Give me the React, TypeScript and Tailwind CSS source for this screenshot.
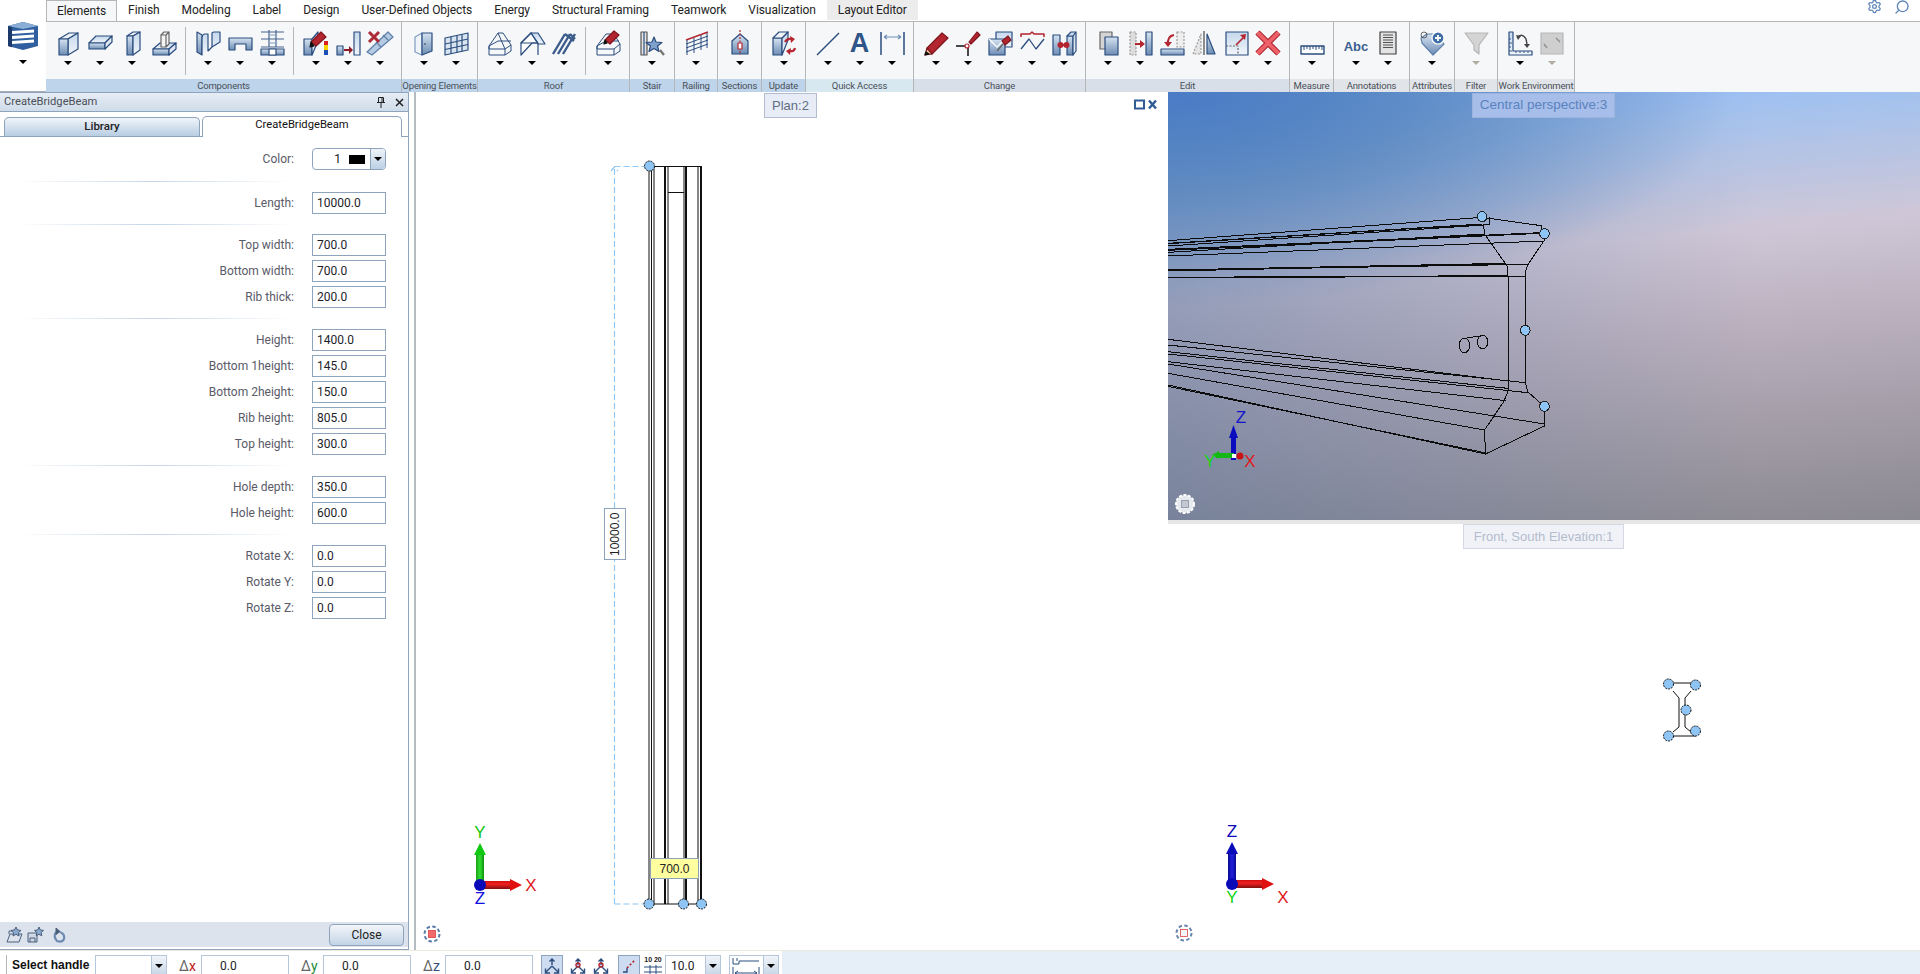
import { Settings, Search } from "lucide-react";
import type { ReactNode } from "react";

const NAVY = "#2b4d7e";
const RED = "#b3252f";

// every ribbon icon sits in a 32x30 box
function Ico({ children }: { children: ReactNode }) {
  return (
    <svg width="32" height="30" viewBox="0 0 32 30" fill="none" stroke={NAVY} strokeWidth="1.2" strokeLinejoin="round">
      {children}
    </svg>
  );
}

const B = "url(#ibar)";
const P = "url(#ipale)";

const icons: Record<string, ReactNode> = {
  wall: (
    <>
      <path d="M7 12 17 6h9l-10 6z" fill="#eef3f8" />
      <path d="M16 12 26 6v16l-10 6z" fill={P} />
      <path d="M7 12h9v16H7z" fill={B} />
    </>
  ),
  slab: (
    <>
      <path d="M5 16 12 9h16l-7 7z" fill={P} />
      <path d="M5 16h16v6H5z" fill={B} />
      <path d="m21 16 7-7v6l-7 7z" fill="#dfe8f2" />
    </>
  ),
  column: (
    <>
      <path d="m11 9 6-4h7l-7 4z" fill="#eef3f8" />
      <path d="M11 9h6v19h-6z" fill={B} />
      <path d="m17 9 7-4v18l-7 5z" fill={P} />
    </>
  ),
  footing: (
    <>
      <path d="M5 22 12 16h16l-7 6z" fill={P} />
      <path d="M5 22h16v6H5z" fill={B} />
      <path d="m21 22 7-6v6l-7 6z" fill="#dfe8f2" />
      <path d="m13 8 3-3h5l-3 3zM13 8h5v12h-5zM18 8l3-3v12l-3 3z" fill="#f4f4f4" stroke="#666" />
    </>
  ),
  stripWall: (
    <>
      <path d="M5 5l5 3v20l-5-3z" fill={B} />
      <path d="M10 28V12q0-5 3-5h3v17l4-4V6q0-1 2-1h6v10l-8 5" fill={P} stroke={NAVY} />
    </>
  ),
  lintel: <path d="M5 11h23v12h-6v-6H11v6H5z" fill={B} />,
  joint: (
    <>
      <path d="M5 5h23M5 12h23M5 20h23M13 3v17M20 3v17" stroke="#48658f" />
      <path d="M14 8h5M14 16h5" stroke="#7f9dc2" />
      <path d="M5 22h23v6H5z" fill={B} />
      <path d="M13 22h7v6h-7z" fill="#fff" />
    </>
  ),
  paintWall: (
    <>
      <path d="M4 12h8v16H4z" fill={B} />
      <path d="m12 12 6-7v9l-6 14z" fill={P} />
      <path d="M11 15 21 5l5 5-10 9z" fill={RED} stroke="#7e1620" />
      <path d="m11 15 3 4-4 1z" fill="#111" stroke="#111" />
      <path d="M24 14h4v4h-4z" fill="#d61f26" stroke="none" />
      <path d="M24 18h4v5h-4z" fill="#f6d000" stroke="none" />
      <path d="M24 23h4v5h-4z" fill="#1a4fb5" stroke="none" />
    </>
  ),
  pushBar: (
    <>
      <path d="M5 19h6v9H5z" fill={B} />
      <path d="M22 5h6v23h-6z" fill={P} />
      <path d="M12 23h7" stroke="#8d1c28" strokeWidth="2" />
      <path d="m17 19 4 4-4 4z" fill="#8d1c28" stroke="none" />
    </>
  ),
  delWall: (
    <>
      <path d="m7 28 21-18-5-5-21 20z" fill="#b4c9e2" stroke="#5d7fa9" transform="translate(1 0)" />
      <path d="m17 20-5-5M24 13l-5-5" stroke="#5d7fa9" />
      <path d="m5 5 10 10M15 5 5 15" stroke="#ad2b37" strokeWidth="3" />
    </>
  ),
  door: (
    <>
      <path d="M7 10 14 6v22l-7-3z" fill="#eff4f9" stroke="#7f9cc0" />
      <path d="M14 6h10v18l-10 4z" fill={B} />
      <circle cx="17" cy="17" r=".7" fill="#111" stroke="none" />
    </>
  ),
  grid: (
    <>
      <path d="M5 11 28 6v17L5 28z" fill="#d8e4f0" />
      <path d="M5 17 28 12M5 22.500 28 17.500M11 10v17M17 8.500v17M22 7.500v17" />
    </>
  ),
  wireHouse: <path d="M5 19 14 6h5l8 12-6 4H5zM5 19v9h16v-6M21 28l6-4v-6M14 6l7 16M5 19l9-5h13" strokeWidth="1" />,
  roof: (
    <>
      <path d="M5 28V16L15 6l13 10v0l-12 0z" fill="#fff" />
      <path d="M15 6h7l7 11H22z" fill={P} />
      <path d="M5 16 15 6l7 10H5zM22 16v12" />
    </>
  ),
  rafters: <path d="M5 27 17 7M10 27 22 7M15 27 27 7M17 7l9 7M22 7l5 5" strokeWidth="2.4" stroke="#3c5d8c" />,
  wirePaint: (
    <>
      <path d="M5 19 14 7h8l6 10-6 5H5zM5 19v9h17v-6M22 28l6-4v-7M5 19l9-5h13" strokeWidth="1" />
      <path d="M13 13 22 4l5 4-9 9z" fill={RED} stroke="#7e1620" />
      <path d="m13 13 2 3-3 1z" fill="#111" stroke="#111" />
    </>
  ),
  stairFind: (
    <>
      <path d="M5 5h6v23H5z" fill="#e4e4e4" stroke="#555" />
      <path d="M8 5v23" stroke={NAVY} />
      <path d="m18 10 2 5 6 .5-4.500 3.500 1.500 5.500-5-3-5 3 1.500-5.500L10 15.500l6-.5z" fill="#7ea2cc" />
      <path d="m24 23 4 5" stroke="#777" strokeWidth="2.400" />
    </>
  ),
  railing: (
    <>
      <path d="M6 13 28 5" stroke={RED} strokeWidth="1.500" />
      <path d="M6 17 28 9M6 21 28 13M6 25 28 17M7 13v15M14 11v15M21 8v15M27 6v15" strokeWidth="1" />
    </>
  ),
  section: (
    <>
      <path d="M8 14 16 7l8 7v13H8z" fill={B} />
      <path d="M16 3v25" stroke={RED} strokeDasharray="2 1.500" />
      <path d="M14 16h4v6h-4z" fill="#fff" stroke={RED} />
    </>
  ),
  update: (
    <>
      <path d="M5 11h9v17H5z" fill={B} />
      <path d="m14 11 6-6v8l-6 15z" fill={P} />
      <path d="m5 11 6-6h9l-6 6z" fill="#eef3f8" />
      <path d="M17 15q2-4 6-3" stroke={RED} strokeWidth="2.200" />
      <path d="m22 9 5 3-4 4z" fill={RED} stroke="none" />
      <path d="M27 21q-1 4-5 3" stroke={RED} strokeWidth="2.200" />
      <path d="m23 21-5 3 4 4z" fill={RED} stroke="none" />
    </>
  ),
  line: <path d="M5 28 27 6" strokeWidth="1.500" />,
  dim: (
    <>
      <path d="M5 5v23M28 5v23" strokeWidth="1.500" />
      <path d="M8 10h17M8 10l3-2M8 10l3 2M25 10l-3-2M25 10l-3 2" stroke="#6f8fb7" />
    </>
  ),
  pencil: (
    <>
      <path d="M7 21 22 6l6 5-16 16z" fill={RED} stroke="#7e1620" />
      <path d="m7 21 5 6-7 1z" fill="#e9c695" stroke="#7e1620" />
      <path d="m5 28 1-3 3 2z" fill="#111" stroke="#111" />
    </>
  ),
  trim: (
    <>
      <path d="M4 19h9M16 21v8" stroke="#111" strokeWidth="1.500" />
      <circle cx="15" cy="19" r="2" fill="#fff" stroke={RED} />
      <path d="m17 15 8-10 3 3-9 9z" fill={RED} stroke="#7e1620" />
    </>
  ),
  offset: (
    <>
      <path d="M12 5h16v15H12z" fill={P} />
      <path d="M5 12h16v16H5z" fill={B} />
      <path d="m5 12 8 8 8-8" stroke="#fff" />
      <path d="m13 24 6-7" stroke="#666" strokeWidth="1.500" />
      <path d="m18 14 6-5 3 4-6 5z" fill={RED} stroke="#7e1620" />
    </>
  ),
  zigzag: (
    <>
      <path d="M5 10V7h9l2-2 2 2h10v3" stroke={RED} strokeWidth="1.500" />
      <path d="m5 22 8-10 7 10 8-10" strokeWidth="1.300" />
    </>
  ),
  connect: (
    <>
      <path d="M5 8h7v20H5z" fill={B} />
      <path d="M19 9h6v19h-6z" fill={B} />
      <path d="m19 9 4-4h5l-3 4zM25 9l3-4v19l-3 4z" fill={P} />
      <path d="M12 18h7" stroke={RED} strokeWidth="2" />
      <circle cx="12.500" cy="18" r="3" fill={RED} stroke="none" />
      <circle cx="18.500" cy="18" r="3" fill={RED} stroke="none" />
    </>
  ),
  copy: (
    <>
      <path d="M8 5h12v17H8z" fill="#d4d4d4" stroke="#666" />
      <path d="M13 10h13v18H13z" fill={B} />
    </>
  ),
  move: (
    <>
      <path d="M6 5h6v23H6z" fill="#ddd" stroke="#999" strokeDasharray="2 1.500" />
      <path d="M22 5h6v23h-6z" fill={B} />
      <path d="M11 17h7" stroke={RED} strokeWidth="2" />
      <path d="m16 13 5 4-5 4z" fill={RED} stroke="none" />
    </>
  ),
  rotate: (
    <>
      <path d="M5 22h23v6H5z" fill={B} />
      <path d="M21 5h7v15h-7z" fill="#eee" stroke="#999" strokeDasharray="2 1.500" />
      <path d="M18 8q-7 1-6 10" stroke={RED} strokeWidth="2" />
      <path d="m8 15 4 5 4-5z" fill={RED} stroke="none" />
    </>
  ),
  mirror: (
    <>
      <path d="M13 7v20H5z" fill="#e5e5e5" stroke="#999" strokeDasharray="2 1.500" />
      <path d="M16 4v24" stroke="#444" />
      <path d="M19 7v20h8z" fill={B} />
    </>
  ),
  scale: (
    <>
      <path d="M6 5h22v23H6z" fill={P} />
      <path d="M6 19h12v9" stroke="#666" strokeDasharray="2 1.500" />
      <path d="m16 18 8-8" stroke={RED} strokeWidth="1.700" />
      <path d="m20 8 6-1-1 6z" fill={RED} stroke="none" />
    </>
  ),
  del: (
    <>
      <path d="m7 7 21 21M28 7 7 28" stroke="#a51e28" strokeWidth="6" transform="translate(-1.500 -1.500)" />
      <path d="m7 7 21 21M28 7 7 28" stroke="#ee6068" strokeWidth="4" transform="translate(-1.500 -1.500)" />
    </>
  ),
  ruler: (
    <>
      <path d="M5 19h23v8H5z" fill="#fff" strokeWidth="1.400" />
      <path d="M8 19v4M11 19v3M14 19v4M17 19v3M20 19v4M23 19v3M26 19v4" strokeWidth="1" />
    </>
  ),
  abc: (
    <text x="16" y="24" textAnchor="middle" fontFamily="Liberation Sans, sans-serif" fontWeight="700" fontSize="13" fill="#3d5f92" stroke="none">
      Abc
    </text>
  ),
  doc: (
    <>
      <path d="M8 5h16v22H8z" fill="#e3e3e3" stroke="#444" />
      <path d="M11 8h10M11 10.500h10M11 13h10M11 15.500h10M11 18h10M11 20.500h10" stroke="#444" strokeWidth=".9" />
    </>
  ),
  tag: (
    <>
      <path d="M5 11 11 7h9l8 10-11 11L6 16z" fill={B} stroke="#5f82ad" />
      <circle cx="8" cy="8" r="3" stroke="#444" strokeWidth=".8" />
      <circle cx="22" cy="11" r="6" fill="#3f6da6" stroke="#fff" />
      <path d="M19 11h6M22 8v6" stroke="#fff" strokeWidth="1.800" />
    </>
  ),
  filter: <path d="M5 6h23l-9 12v9l-5-4v-5z" fill="#d4d4d4" stroke="#b5b5b5" />,
  workEnv: (
    <>
      <path d="M5 5v23h23v-4H9V5z" fill={P} />
      <path d="M5 24h3M5 20h2M5 16h3M5 12h2M12 24v2M16 24v2M20 24v2M24 24v2" strokeWidth=".9" />
      <path d="M13 11q5-6 9 1l1 5" stroke="#444" strokeWidth="1.400" />
      <path d="m20 17 3 4 3-4zM12 8l2 5 3-4z" fill="#444" stroke="none" />
    </>
  ),
  zoomBox: (
    <>
      <path d="M5 6h22v21H5z" fill="#cfcfcf" stroke="#b8b8b8" />
      <path d="m11 21-3-4M20 11l4 4" stroke="#8f8f8f" strokeWidth="1.400" />
    </>
  ),
};

type Group = {
  label: string;
  width: string;
  strip: string;
  items: string[];
};

const groups: Group[] = [
  { label: "Components", width: "w-[356px]", strip: "bg-[#bdd4ea]", items: ["wall", "slab", "column", "footing", "|", "stripWall", "lintel", "joint", "|", "paintWall", "pushBar", "delWall"] },
  { label: "Opening Elements", width: "w-[76px]", strip: "bg-[#bdd4ea]", items: ["door", "grid"] },
  { label: "Roof", width: "w-[152px]", strip: "bg-[#bdd4ea]", items: ["wireHouse", "roof", "rafters", "|", "wirePaint"] },
  { label: "Stair", width: "w-[45px]", strip: "bg-[#bdd4ea]", items: ["stairFind"] },
  { label: "Railing", width: "w-[43px]", strip: "bg-[#bdd4ea]", items: ["railing"] },
  { label: "Sections", width: "w-[44px]", strip: "bg-[#bdd4ea]", items: ["section"] },
  { label: "Update", width: "w-[44px]", strip: "bg-[#bdd4ea]", items: ["update"] },
  { label: "Quick Access", width: "w-[108px]", strip: "bg-[#d8e8f0]", items: ["line", "letter", "dim"] },
  { label: "Change", width: "w-[172px]", strip: "bg-[#d8dfe9]", items: ["pencil", "trim", "offset", "zigzag", "connect"] },
  { label: "Edit", width: "w-[204px]", strip: "bg-[#d8dfe9]", items: ["copy", "move", "rotate", "mirror", "scale", "del"] },
  { label: "Measure", width: "w-[44px]", strip: "bg-[#e1e5ea]", items: ["ruler"] },
  { label: "Annotations", width: "w-[76px]", strip: "bg-[#e1e5ea]", items: ["abc", "doc"] },
  { label: "Attributes", width: "w-[45px]", strip: "bg-[#e1e5ea]", items: ["tag"] },
  { label: "Filter", width: "w-[43px]", strip: "bg-[#e1e5ea]", items: ["filter"] },
  { label: "Work Environment", width: "w-[77px]", strip: "bg-[#e1e5ea]", items: ["workEnv", "zoomBox"] },
];

const tabs = ["Finish", "Modeling", "Label", "Design", "User-Defined Objects", "Energy", "Structural Framing", "Teamwork", "Visualization"];

const fieldGroups = [
  [{ label: "Length:", value: "10000.0" }],
  [
    { label: "Top width:", value: "700.0" },
    { label: "Bottom width:", value: "700.0" },
    { label: "Rib thick:", value: "200.0" },
  ],
  [
    { label: "Height:", value: "1400.0" },
    { label: "Bottom 1height:", value: "145.0" },
    { label: "Bottom 2height:", value: "150.0" },
    { label: "Rib height:", value: "805.0" },
    { label: "Top height:", value: "300.0" },
  ],
  [
    { label: "Hole depth:", value: "350.0" },
    { label: "Hole height:", value: "600.0" },
  ],
  [
    { label: "Rotate X:", value: "0.0" },
    { label: "Rotate Y:", value: "0.0" },
    { label: "Rotate Z:", value: "0.0" },
  ],
];

function Caret({ muted }: { muted?: boolean }) {
  return <span className={`block h-0 w-0 border-x-[4px] border-t-[4px] border-x-transparent ${muted ? "border-t-[#b0aca0]" : "border-t-black"}`} />;
}

function RibbonGroup({ group }: { group: Group }) {
  const isMuted = (name: string) => name === "filter" || name === "zoomBox";
  return (
    <div className={`flex flex-col border-r border-[#b4b6b8] ${group.width}`}>
      <div className="flex h-[57px] justify-center pt-[5px]">
        {group.items.map((name, i) =>
          name === "|" ? (
            <div key={i} className="flex h-[48px] w-[12px] justify-center">
              <div className="w-px bg-[#b4b6b8]" />
            </div>
          ) : (
            <div key={i} className="flex w-8 flex-col items-center">
              {name === "letter" ? (
                <div className="flex h-[30px] w-8 items-center justify-center pt-[3px] font-['Liberation_Sans',sans-serif] text-[27px] font-bold leading-[27px] text-[#2f5488]">A</div>
              ) : (
                <Ico>{icons[name]}</Ico>
              )}
              <div className="mt-[4px]">
                <Caret muted={isMuted(name)} />
              </div>
            </div>
          ),
        )}
      </div>
      <div className={`h-[13px] whitespace-nowrap text-center text-[9.5px] leading-[13px] tracking-[-0.15px] text-[#4a4f58] ${group.strip}`}>{group.label}</div>
    </div>
  );
}

function AppIcon() {
  return (
    <svg width="32" height="28" viewBox="0 0 32 28">
      <path d="M1 4 16 0l15 4v20l-15 4-15-4z" fill="#2f5f9e" />
      <path d="M1 4 16 0l15 4-15 3z" fill="#8aaed6" />
      <path d="M5 9l22-1.500v3L5 12zM5 14l22-1.500v3L5 17zM5 19l22-1.500v3L5 22z" fill="#fff" />
      <path d="M1 4v20l4 1.200V5z" fill="#1c3a6c" />
    </svg>
  );
}

function Ribbon() {
  return (
    <div className="flex h-[92px] border-b border-[#a9acb0]">
      <div className="flex w-[46px] flex-col items-start bg-white pl-[7px] pt-[22px]">
        <AppIcon />
        <div className="ml-[12px] mt-[10px]">
          <Caret />
        </div>
      </div>
      <div className="flex min-w-0 flex-1 flex-col">
        <div className="flex h-[21px] items-stretch bg-white pb-px text-[12px] tracking-[-0.08px] text-[#222]">
          <div className="-mb-[2px] flex items-center border-x border-t border-[#b4b6b8] bg-[#f6f7f9] px-[10px] pb-[2px]">Elements</div>
          {tabs.map((t) => (
            <div key={t} className="flex items-center px-[11px]">
              {t}
            </div>
          ))}
          <div className="flex items-center bg-[#ececec] px-[11px]">Layout Editor</div>
          <div className="flex flex-1 items-center justify-end gap-[12px] pb-[7px] pr-[10px] text-[#5f86b8]">
            <Settings size={15} />
            <Search size={16} className="-scale-x-100" />
          </div>
        </div>
        <div className="flex flex-1 border-t border-[#b4b6b8] bg-[#f6f7f9]">
          {groups.map((g) => (
            <RibbonGroup key={g.label} group={g} />
          ))}
        </div>
      </div>
    </div>
  );
}

function Divider({ height }: { height: string }) {
  return (
    <div className={`flex items-center pl-[15px] ${height}`}>
      <div className="h-px w-[278px] bg-gradient-to-r from-transparent via-[#c5d6e8] to-transparent" />
    </div>
  );
}

function Field({ label, value }: { label: string; value: string }) {
  return (
    <div className="flex h-[22px] items-center">
      <span className="w-[294px] text-right text-[12px] text-[#5a5a68]">{label}</span>
      <input readOnly value={value} className="ml-[18px] h-[22px] w-[74px] border border-[#8ea3bc] bg-white pl-[4px] text-[12px] text-[#1d1d2a] outline-none" />
    </div>
  );
}

function ParameterPanel() {
  return (
    <aside className="flex w-[409px] flex-col border-b border-r border-[#8ea3bc] bg-white">
      <div className="flex h-[20px] items-center justify-between border-b border-t border-[#8ea3bc] bg-gradient-to-b from-[#e6edf5] to-[#cfdce9] pl-[4px] pr-[3px] text-[11.2px] text-[#4b4f58]">
        <span>CreateBridgeBeam</span>
        <span className="flex items-center gap-[9px] pr-[1px]">
          <svg width="10" height="12" viewBox="0 0 10 12" stroke="#222" fill="none">
            <path d="M2.500 1.500h5v5h-5zM1 6.500h8M5 7v5M6 2v4" />
          </svg>
          <svg width="9" height="9" viewBox="0 0 9 9" stroke="#222" strokeWidth="1.500">
            <path d="m1 1 7 7M8 1 1 8" />
          </svg>
        </span>
      </div>
      <div className="flex h-[24px] items-end pl-[4px]">
        <div className="flex h-[19px] w-[196px] items-center justify-center rounded-t-[5px] border border-b-0 border-[#8ea3bc] bg-gradient-to-b from-[#f0f4f9] to-[#b8cde3] text-[11.5px] font-medium text-[#222]">Library</div>
        <div className="relative z-10 -mb-px ml-[2px] flex h-[21px] w-[200px] items-start justify-center rounded-t-[5px] border border-b-0 border-[#8ea3bc] bg-white text-[11.2px] text-[#111]">CreateBridgeBeam</div>
      </div>
      <div className="flex flex-1 flex-col border-t border-[#8ea3bc] pt-[11px]">
        <div className="flex h-[22px] items-center">
          <span className="w-[294px] text-right text-[12px] text-[#5a5a68]">Color:</span>
          <div className="ml-[18px] flex h-[22px] w-[74px] overflow-hidden rounded-[4px] border border-[#8ea3bc]">
            <div className="flex flex-1 items-center justify-end gap-[8px] pr-[5px] text-[12px] text-[#222]">
              1<span className="h-[9px] w-4 bg-black" />
            </div>
            <div className="flex w-[15px] items-center justify-center border-l border-[#8ea3bc] bg-gradient-to-b from-[#eef3f8] to-[#bcd0e5]">
              <Caret />
            </div>
          </div>
        </div>
        <Divider height="h-[22px]" />
        {fieldGroups.map((fields, i) => (
          <div key={i}>
            {i > 0 && <Divider height={i === 1 ? "h-[20px]" : "h-[21px]"} />}
            <div className="flex flex-col gap-[4px]">
              {fields.map((f) => (
                <Field key={f.label} label={f.label} value={f.value} />
              ))}
            </div>
          </div>
        ))}
        <div className="mb-[2px] mt-auto flex h-[25px] items-center justify-between bg-[#dce3ed] pl-[6px] pr-[4px]">
          <svg width="64" height="18" viewBox="0 0 64 18" fill="none" stroke="#4a5f7c">
            <path d="M1 16 4 8h12l-3 8zM3 8V5h5" />
            <path d="m10 1 1.500 3 3.500.4-2.500 2.300.6 3.300-3.100-1.700L7 10l.6-3.300L5 4.400 8.500 4z" fill="#8aaad0" />
            <path d="M22 7h9v9h-9zM24 16v-4h5v4" fill="#cfd8e4" />
            <path d="m33 1 1.300 3 3.200.4-2.300 2.200.6 3.200L33 8.300l-2.800 1.500.6-3.200-2.300-2.200L31.700 4z" fill="#8aaad0" />
            <path d="M50 6q-3 5 1 9 5 2 7-2 1-5-4-7" strokeWidth="2.200" stroke="#6d8bb2" />
            <path d="m50 2 4 3.500-4 3z" fill="#4a5f7c" />
          </svg>
          <button className="h-[22px] w-[75px] rounded-[4px] border border-[#8ea3bc] bg-gradient-to-b from-[#f3f6fa] to-[#c3d4e6] text-[12px] text-[#222]">Close</button>
        </div>
      </div>
    </aside>
  );
}

function Handle({ x, y }: { x: number; y: number }) {
  return <circle cx={x} cy={y} r="5" fill="#8ec5f5" stroke="#111" strokeWidth="1" strokeDasharray="2 1" />;
}

// arrow triad used by the two flat views, page coordinates
function Axis({ cx, cy, up, upLabel, upFill, mid, midLabel, labelDy }: { cx: number; cy: number; up: string; upLabel: string; upFill: string; mid: string; midLabel: string; labelDy: number }) {
  const labelFont = { fontFamily: "Liberation Sans, sans-serif", fontSize: 17 };
  return (
    <g>
      <rect x={cx - 4} y={cy - 33} width="8" height="33" fill={upFill} />
      <path d={`M${cx - 6} ${cy - 30}L${cx} ${cy - 42} ${cx + 6} ${cy - 30}z`} fill={up} />
      <rect x={cx} y={cy - 4} width="31" height="8" fill="url(#axisRed)" />
      <path d={`M${cx + 30} ${cy - 6}L${cx + 42} ${cy} ${cx + 30} ${cy + 6}z`} fill="#e01010" />
      <circle cx={cx} cy={cy} r="6" fill={mid} />
      <text x={cx} y={cy - 47} textAnchor="middle" fill={up} style={labelFont}>
        {upLabel}
      </text>
      <text x={cx} y={cy + 19} textAnchor="middle" fill={midLabel === "Y" ? "#14d614" : "#1010e0"} style={labelFont}>
        {midLabel}
      </text>
      <text x={cx + 51} y={cy + 6 + labelDy} textAnchor="middle" fill="#e01818" style={labelFont}>
        X
      </text>
    </g>
  );
}

function NavDial({ x, y, center, ring }: { x: number; y: number; center: string; ring: string }) {
  return (
    <g transform={`translate(${x} ${y})`}>
      <circle r="7.500" fill="none" stroke={ring} strokeWidth="2" strokeDasharray="3.500 2.400" />
      <rect x="-3.500" y="-3.500" width="7" height="7" fill={center} stroke="#d44" strokeWidth=".8" />
    </g>
  );
}

function PlanView() {
  const longLines = [
    [649, 1],
    [651.5, 1],
    [654, 1],
    [665, 2],
    [668, 1],
    [684, 1],
    [686, 2],
    [698, 1],
    [701, 2],
  ];
  return (
    <section className="relative flex-1 border-l-2 border-[#b7bbc2] bg-white">
      <div className="absolute left-[348px] top-[1px] z-10 flex h-[25px] w-[53px] items-center justify-center border border-[#b4bdd0] bg-[#e8ecf6] font-['Liberation_Sans',sans-serif] text-[13px] text-[#5f6e85]">Plan:2</div>
      <svg className="absolute right-[10px] top-[6px]" width="24" height="14" viewBox="0 0 24 14" fill="none" stroke="#2f5b94" strokeWidth="2">
        <rect x="1" y="2.500" width="9" height="8" />
        <path d="m15 2.500 7 8M22 2.500l-7 8" strokeWidth="2.400" />
      </svg>
      <svg className="absolute inset-0 h-full w-full">
        <g transform="translate(-416 -92)">
          <path d="M614.500 904V167M611 171l3.500-4 3.500 4M614.500 904H649M614.500 166.500H649" fill="none" stroke="#8fc7f5" strokeWidth="1.200" strokeDasharray="6 3" />
          {longLines.map(([x, w]) => (
            <line key={x} x1={x} x2={x} y1="166" y2="904" stroke="#111" strokeWidth={w} />
          ))}
          <path d="M649 166.500h52M649 904h52M668 192.500h16" stroke="#111" />
          <Handle x={649.5} y={166} />
          <Handle x={649} y={904} />
          <Handle x={683.5} y={904} />
          <Handle x={701.5} y={904} />
          <Axis cx={480} cy={885} up="#10c810" upLabel="Y" upFill="url(#axisGreen)" mid="#0a0ab8" midLabel="Z" labelDy={0} />
          <NavDial x={432} y={934} center="#f26a6a" ring="#5a7aa8" />
        </g>
      </svg>
      <div className="absolute left-[188px] top-[416px] flex h-[52px] w-[22px] rotate-180 items-center justify-center border border-[#8ea3bc] bg-white font-['Liberation_Sans',sans-serif] text-[12px] text-[#222] [writing-mode:vertical-rl]">10000.0</div>
      <div className="absolute left-[234px] top-[766px] flex h-[21px] w-[49px] items-center justify-center border border-[#8ea3bc] bg-[#ffffa0] font-['Liberation_Sans',sans-serif] text-[12px] text-[#222]">700.0</div>
    </section>
  );
}

function PerspectiveView() {
  // coordinates below are in a 1568 x 1284 drawing stretched over the view
  const lines = [
    "M0 452 655 382",
    "M0 460 655 402",
    "M0 461 655 403",
    "M0 468 670 404",
    "M0 478 778 428",
    "M0 481 778 430",
    "M0 487 660 432",
    "M0 498 785 453",
    "M0 540 704 520",
    "M0 543 704 522",
    "M0 541 750 523",
    "M0 562 708 557",
    "M0 563 745 559",
    "M0 748 710 873",
    "M0 765 745 878",
    "M0 785 708 895",
    "M0 792 750 908",
    "M0 815 705 932",
    "M0 822 785 1002",
    "M0 850 660 1020",
    "M0 885 662 1092",
    "M0 889 660 1088",
    "M655 382 778 407V428L785 450 750 525 745 545V878L750 905 785 950V1008L662 1092 660 1020 700 935 710 900V590L708 530 660 432 658 402H670V382",
    "M618 745 656 737",
  ];
  const handles = [
    [655, 380],
    [785, 431],
    [745, 721],
    [785, 949],
  ];
  const axisFont = { fontFamily: "Liberation Sans, sans-serif", fontSize: 17 };
  return (
    <section className="relative h-[428px] bg-[radial-gradient(75%_50%_at_0%_0%,#4a7bc5_0%,rgba(80,130,190,0.7)_45%,rgba(100,150,190,0)_100%),linear-gradient(to_right,rgba(74,106,150,0.42),rgba(74,106,150,0)_78%),linear-gradient(175deg,#8fbaff_0%,#a4c2ee_14%,#cfc7d7_38%,#bab0be_58%,#8a8890_100%)]">
      <div className="absolute left-[304px] top-[1px] z-10 flex h-[25px] w-[143px] items-center justify-center border border-[#9db4dc] bg-[#a6bee9] font-['Liberation_Sans',sans-serif] text-[13.500px] text-[#5b82c0]">Central perspective:3</div>
      <svg className="absolute inset-0 h-full w-full" viewBox="0 6 1568 1284" preserveAspectRatio="none" shapeRendering="crispEdges">
        {lines.map((d) => (
          <path key={d} d={d} fill="none" stroke="#0c0c0c" strokeWidth="1" vectorEffect="non-scaling-stroke" />
        ))}
        <ellipse cx="618" cy="766" rx="11" ry="22" fill="none" stroke="#0c0c0c" vectorEffect="non-scaling-stroke" />
        <ellipse cx="656" cy="756" rx="11" ry="20" fill="none" stroke="#0c0c0c" vectorEffect="non-scaling-stroke" />
        {handles.map(([x, y]) => (
          <ellipse key={x + y} cx={x} cy={y} rx="10" ry="15" fill="#8ec5f5" stroke="#222" vectorEffect="non-scaling-stroke" />
        ))}
      </svg>
      <svg className="absolute inset-0 h-full w-full">
        <g transform="translate(-1168 -92)">
          <rect x="1231" y="432" width="5" height="28" fill="#0a0ac0" />
          <path d="M1229 438l4.500-13 4.500 13z" fill="#0a0ac0" />
          <rect x="1216" y="453" width="18" height="5" fill="#14b814" />
          <path d="M1219 451l-7 4 7 4z" fill="#14b814" />
          <circle cx="1240" cy="456" r="3.500" fill="#c81414" />
          <rect x="1232" y="454" width="4" height="4" fill="#fff" />
          <text x="1241" y="423" textAnchor="middle" fill="#1414c8" style={axisFont}>
            Z
          </text>
          <text x="1210" y="467" textAnchor="middle" fill="#14d614" style={axisFont}>
            Y
          </text>
          <text x="1250" y="467" textAnchor="middle" fill="#e01818" style={axisFont}>
            X
          </text>
          <circle cx="1185" cy="504" r="9" fill="#e6e9ef" stroke="#fff" strokeDasharray="3 1.500" strokeWidth="2" />
          <rect x="1181.500" y="500.500" width="7" height="7" fill="#c3c8d2" stroke="#9aa0aa" />
        </g>
      </svg>
    </section>
  );
}

function ElevationView() {
  return (
    <section className="relative flex-1 bg-white">
      <div className="absolute left-[295px] top-0 z-10 flex h-[25px] w-[161px] items-center justify-center border border-[#d3d8e4] bg-[#f0f2f8] font-['Liberation_Sans',sans-serif] text-[13px] text-[#b4bccc]">Front, South Elevation:1</div>
      <svg className="absolute inset-0 h-full w-full">
        <g transform="translate(-1168 -524)">
          <path d="M1668 683h28M1668 736h28M1673 691l6 7v29l-6 5M1691 691l-6 7v29l6 5" fill="none" stroke="#111" />
          <Handle x={1668.5} y={684} />
          <Handle x={1695.5} y={685} />
          <Handle x={1686} y={710} />
          <Handle x={1668.5} y={736} />
          <Handle x={1695.5} y={731} />
          <Axis cx={1232} cy={884} up="#0a0ab8" upLabel="Z" upFill="url(#axisBlue)" mid="#0a0ab8" midLabel="Y" labelDy={13} />
          <NavDial x={1184} y={933} center="#f2f4f8" ring="#6a84ac" />
        </g>
      </svg>
    </section>
  );
}

function Combo({ width, children }: { width: string; children?: ReactNode }) {
  return (
    <div className={`flex h-[22px] overflow-hidden border border-[#b5c6da] bg-white ${width}`}>
      <div className="flex flex-1 items-center pl-[5px] text-[12px] text-[#222]">{children}</div>
      <div className="flex w-[15px] items-center justify-center border-l border-[#b5c6da] bg-gradient-to-b from-[#f2f5f9] to-[#c5d5e6]">
        <Caret />
      </div>
    </div>
  );
}

function Delta({ axis, color, margin }: { axis: string; color: string; margin: string }) {
  return (
    <>
      <span className={`w-[18px] text-[14px] leading-none ${margin}`}>
        <span className="text-[#666]">Δ</span>
        <span className={color}>{axis}</span>
      </span>
      <input readOnly value="0.0" className="ml-[4px] h-[22px] w-[88px] border border-[#b5c6da] bg-white pl-[18px] text-[12px] text-[#222] outline-none" />
    </>
  );
}

function Snap({ active, dots }: { active?: boolean; dots?: boolean }) {
  return (
    <div className={`flex h-[22px] w-[22px] items-center justify-center ${active ? "border border-[#8ea3bc] bg-[#cddcf0]" : ""}`}>
      <svg width="18" height="18" viewBox="0 0 18 18" fill="none" stroke="#2b4d7e" strokeWidth="1.400">
        <path d="M9 8v-6M6.500 4.500 9 2l2.500 2.500M9 9l-6 6M2.500 11.500V16H7M9 9l6 6M15.500 11.500V16H11" />
        {dots && <circle cx="9" cy="8" r="2" stroke="#b3252f" />}
      </svg>
    </div>
  );
}

function StatusBar() {
  return (
    <footer className="flex h-[24px] items-start overflow-hidden border-t border-[#eceadf] bg-white pt-[4px]">
      <div className="ml-[6px] h-[22px] w-px bg-[#b4b6b8]" />
      <span className="ml-[5px] w-[78px] whitespace-nowrap font-['Liberation_Sans',sans-serif] text-[12px] font-bold leading-[20px] text-[#111]">Select handle</span>
      <div className="ml-[5px]">
        <Combo width="w-[72px]" />
      </div>
      <div className="flex items-center">
        <Delta axis="x" color="text-[#c01818]" margin="ml-[12px]" />
        <Delta axis="y" color="text-[#1c8c3c]" margin="ml-[12px]" />
        <Delta axis="z" color="text-[#35507a]" margin="ml-[12px]" />
      </div>
      <div className="ml-[8px]">
        <Snap active />
      </div>
      <div className="ml-[4px]">
        <Snap dots />
      </div>
      <div className="ml-[1px]">
        <Snap dots />
      </div>
      <div className="ml-[6px] flex h-[22px] w-[22px] items-center justify-center border border-[#8ea3bc] bg-[#cddcf0]">
        <svg width="16" height="16" viewBox="0 0 16 16" fill="none">
          <path d="M2 14h4v-4" stroke="#2b4d7e" strokeWidth="1.400" />
          <path d="m6 10 8-8" stroke="#b3252f" strokeWidth="1.600" strokeDasharray="2 2" />
        </svg>
      </div>
      <div className="ml-[2px] flex h-[22px] w-[22px] flex-col items-center font-['Liberation_Sans',sans-serif] text-[7px] font-bold leading-[9px] text-[#222]">
        10 20
        <svg width="20" height="11" viewBox="0 0 20 11" fill="none" stroke="#2b4d7e">
          <path d="M1 3h18M1 8h18M7 1v9M13 1v9" />
        </svg>
      </div>
      <div className="ml-px">
        <Combo width="w-[56px]">10.0</Combo>
      </div>
      <div className="ml-[8px]">
        <Combo width="w-[50px]">
          <svg width="28" height="18" viewBox="0 0 28 18" fill="none" stroke="#2b4d7e" className="-ml-[3px]">
            <path d="M1 1v6h6V4h20M5 4V1M3 16h22M3 16l3-2M3 16l3 2M25 16l-3-2M25 16l-3 2M1 10v8M27 10v8" />
          </svg>
        </Combo>
      </div>
      <div className="-mt-[4px] ml-[3px] h-[24px] flex-1 bg-[#e6eef7]" />
    </footer>
  );
}

export default function App() {
  return (
    <div className="flex h-[974px] w-[1920px] flex-col overflow-hidden bg-white font-['Roboto',sans-serif]">
      <svg className="absolute h-0 w-0">
        <defs>
          <linearGradient id="ibar" x1="0" y1="0" x2="0" y2="1">
            <stop offset="0" stopColor="#d6e3f1" />
            <stop offset="1" stopColor="#6c8cb4" />
          </linearGradient>
          <linearGradient id="ipale" x1="0" y1="0" x2="0" y2="1">
            <stop offset="0" stopColor="#c5d8ec" />
            <stop offset="1" stopColor="#f1f5fa" />
          </linearGradient>
          <linearGradient id="axisGreen" x1="0" y1="0" x2="1" y2="0">
            <stop offset="0" stopColor="#1aa01a" />
            <stop offset=".5" stopColor="#30e030" />
            <stop offset="1" stopColor="#0c900c" />
          </linearGradient>
          <linearGradient id="axisBlue" x1="0" y1="0" x2="1" y2="0">
            <stop offset="0" stopColor="#0a0a90" />
            <stop offset=".5" stopColor="#2020e0" />
            <stop offset="1" stopColor="#0a0a90" />
          </linearGradient>
          <linearGradient id="axisRed" x1="0" y1="0" x2="0" y2="1">
            <stop offset="0" stopColor="#d01010" />
            <stop offset=".4" stopColor="#f02020" />
            <stop offset="1" stopColor="#801010" />
          </linearGradient>
        </defs>
      </svg>
      <Ribbon />
      <main className="flex min-h-0 flex-1">
        <ParameterPanel />
        <div className="w-[5px] bg-white" />
        <PlanView />
        <div className="flex w-[752px] flex-col">
          <PerspectiveView />
          <div className="h-[4px] bg-[#e6e6e6]" />
          <ElevationView />
        </div>
      </main>
      <StatusBar />
    </div>
  );
}
